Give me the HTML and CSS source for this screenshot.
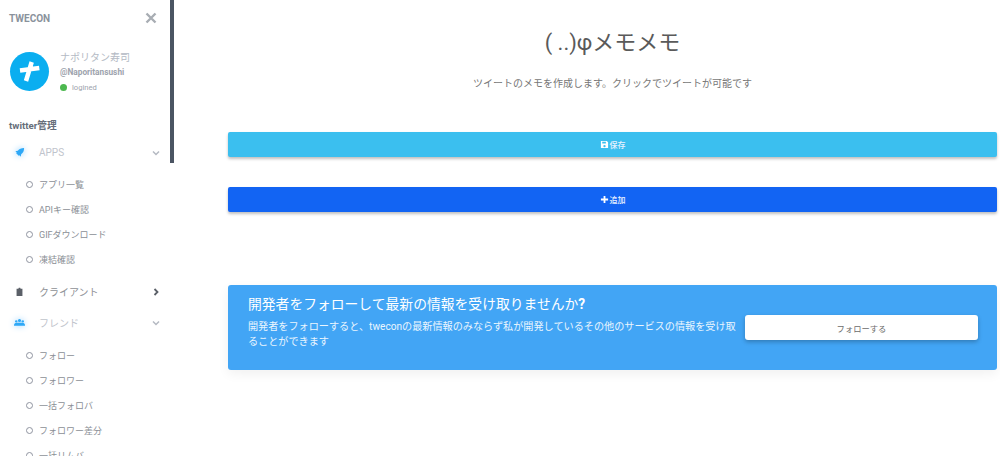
FILE: index.html
```html
<!DOCTYPE html>
<html lang="ja">
<head>
<meta charset="utf-8">
<title>TWECON</title>
<link rel="stylesheet" href="styles.css">
</head>
<body>
<div class="app">
  <aside class="sidebar">
    <div class="brand"><span class="brand-name">TWECON</span>
      <svg class="close" viewBox="0 0 12 12"><path d="M1.500 1.500l9 9M10.500 1.500l-9 9"/></svg>
    </div>
    <div class="profile">
      <div class="avatar"><svg viewBox="0 0 39 39"><path d="M21.700 10L16 29M10 18.500l19.300-2.500"/></svg></div>
      <div class="who">
        <div class="who-name">ナポリタン寿司</div>
        <div class="who-id">@Naporitansushi</div>
        <div class="who-status"><i class="dot"></i>logined</div>
      </div>
    </div>
    <div class="section">twitter管理</div>
    <nav class="nav">
      <div class="item muted">
        <svg class="ico blue" viewBox="0 0 12 12"><path d="M11 1c-3.200 0-5.200 1-6.800 3.200L1.500 4.700 3 6l-.6.8 2.800 2.800.8-.6 1.300 1.500.5-2.700C10 6.200 11 4.200 11 1z"/></svg>
        <span class="label">APPS</span>
        <svg class="chev" viewBox="0 0 10 10"><path d="M2 3.500l3 3 3-3"/></svg>
      </div>
      <ul class="sub">
        <li><i class="ring"></i>アプリ一覧</li>
        <li><i class="ring"></i>APIキー確認</li>
        <li><i class="ring"></i>GIFダウンロード</li>
        <li><i class="ring"></i>凍結確認</li>
      </ul>
      <div class="item">
        <svg class="ico dark" viewBox="0 0 12 12"><path d="M2.800 3h2l.4-1h1.600l.4 1h2v8H2.800z"/></svg>
        <span class="label">クライアント</span>
        <svg class="chev strong" viewBox="0 0 10 10"><path d="M3.500 2l3 3-3 3"/></svg>
      </div>
      <div class="item muted">
        <svg class="ico blue" viewBox="0 0 14 12"><circle cx="7" cy="3.500" r="2"/><circle cx="2.800" cy="4.500" r="1.500"/><circle cx="11.200" cy="4.500" r="1.500"/><path d="M0 9.500c0-2 1.300-3.200 3-3.200h8c1.700 0 3 1.200 3 3.200v.5H0z"/></svg>
        <span class="label">フレンド</span>
        <svg class="chev" viewBox="0 0 10 10"><path d="M2 3.500l3 3 3-3"/></svg>
      </div>
      <ul class="sub sub-wide">
        <li><i class="ring"></i>フォロー</li>
        <li><i class="ring"></i>フォロワー</li>
        <li><i class="ring"></i>一括フォロバ</li>
        <li><i class="ring"></i>フォロワー差分</li>
        <li><i class="ring"></i>一括リムバ</li>
      </ul>
    </nav>
    <div class="thumb"></div>
  </aside>
  <main class="main">
    <h1 class="title">( ..)φメモメモ</h1>
    <p class="lead">ツイートのメモを作成します。クリックでツイートが可能です</p>
    <button class="btn btn-save">
      <svg class="btn-ico" viewBox="0 0 10 10"><path fill-rule="evenodd" d="M1 1h6.500L9 2.500V9H1zM2.500 2v2h4V2zM5 5.500a1.300 1.300 0 1 0 0 2.600 1.300 1.300 0 0 0 0-2.600z"/></svg>保存</button>
    <button class="btn btn-add">
      <svg class="btn-ico" viewBox="0 0 10 10"><path d="M4 1h2v3h3v2H6v3H4V6H1V4h3z"/></svg>追加</button>
    <section class="cta">
      <div class="cta-text">
        <h2 class="cta-title">開発者をフォローして最新の情報を受け取りませんか<b>?</b></h2>
        <p class="cta-body">開発者をフォローすると、tweconの最新情報のみならず私が開発しているその他のサービスの情報を受け取ることができます</p>
      </div>
      <button class="cta-btn">フォローする</button>
    </section>
  </main>
</div>
</body>
</html>
```
FILE: styles.css
```css
* { box-sizing: border-box; }
html, body { margin: 0; height: 100%; overflow: hidden; }
body {
  background: #fff;
  font-family: Roboto, "Noto Sans CJK JP", sans-serif;
  color: #676a6c;
}
.app { display: flex; height: 456px; }
.sidebar {
  position: relative;
  flex: 0 0 174px;
  height: 456px;
  overflow: hidden;
  padding-left: 9px;
}
.thumb {
  position: absolute;
  top: 0; left: 170px;
  width: 3.500px; height: 163px;
  background: #4b5563;
}
.brand {
  display: flex;
  align-items: center;
  justify-content: space-between;
  height: 18px;
  margin-top: 9px;
  padding-right: 17px;
}
.brand-name { font-size: 10px; font-weight: 700; color: #8a929c; }
.close { width: 12px; height: 12px; fill: none; stroke: #a8adb3; stroke-width: 2.400; }
.profile { display: flex; align-items: center; margin-top: 20px; margin-left: 1px; }
.avatar {
  width: 39px; height: 39px; border-radius: 50%;
  background: #0aaef0; flex: none;
}
.avatar svg { display: block; width: 39px; height: 39px; fill: none; stroke: #fff; stroke-width: 4.500; }
.who { margin-left: 11px; padding-top: 3px; }
.who-name { font-size: 10px; line-height: 15px; color: #b4bac4; }
.who-id { font-size: 8.300px; line-height: 15px; font-weight: 700; color: #9da3ad; }
.who-status { display: flex; align-items: center; font-size: 7.600px; line-height: 15px; color: #9da3ad; }
.dot { width: 7px; height: 7px; border-radius: 50%; background: #4cb84f; margin-right: 5px; }
.section { font-size: 9.700px; font-weight: 700; line-height: 14px; margin-top: 24px; color: #666e7a; }
.nav { margin-top: 4px; }
.item { display: flex; align-items: center; height: 31px; font-size: 10px; color: #8e9196; }
.item.muted { color: #bfc4cc; }
.ico { width: 11px; height: 11px; margin-left: 5px; flex: none; }
.ico.blue { fill: #2da8f7; filter: drop-shadow(0 0 3px #8fd0ff); }
.ico.dark { fill: #5b6068; }
.label { margin-left: 14px; flex: 1; }
.chev { width: 10px; height: 10px; margin-right: 13px; fill: none; stroke: #b4b9c2; stroke-width: 1.500; flex: none; }
.chev.strong { stroke: #5b6068; stroke-width: 1.800; }
.sub { list-style: none; margin: 0 0 4px; padding: 4px 0 0 17px; }
.sub-wide { padding-top: 5px; }
.sub li { display: flex; align-items: center; height: 25px; font-size: 9px; color: #8b8f96; }
.ring { width: 7px; height: 7px; border: 1px solid #8f94a0; border-radius: 50%; margin-right: 6px; flex: none; }
.main { flex: 1; padding: 0 3px 0 54px; min-width: 0; }
.title {
  margin: 26px 0 0;
  text-align: center;
  font-size: 22px;
  font-weight: 400;
  line-height: 34px;
  color: #5a5a5a;
}
.lead { margin: 17px 0 0; text-align: center; font-size: 10px; line-height: 14px; color: #777; }
.btn {
  display: flex; align-items: center; justify-content: center;
  width: 100%; height: 25px; border: 0; border-radius: 2px;
  font: 500 8px Roboto, "Noto Sans CJK JP", sans-serif;
  color: #eaf2ff;
  box-shadow: 0 2px 3px rgba(0,0,0,.25);
}
.btn-ico { width: 9px; height: 9px; fill: #fff; margin-right: 1px; }
.btn-save { margin-top: 41px; background: #3bbfef; }
.btn-add { margin-top: 30px; background: #1264f3; }
.cta {
  display: flex; align-items: flex-start;
  margin-top: 73px; height: 85px;
  padding: 9px 19px 0 20px;
  background: #42a5f5; border-radius: 3px;
  box-shadow: 0 4px 12px rgba(0,0,0,.06);
  color: #fff;
}
.cta-text { flex: 1; min-width: 0; }
.cta-title { margin: 0; font-size: 13.800px; font-weight: 400; line-height: 20px; }
.cta-body { margin: 5px 0 0; font-size: 10.150px; line-height: 15px; color: #eaf5fe; }
.cta-btn {
  flex: 0 0 233px; height: 25px; margin: 21px 0 0 5px;
  background: #fff; border: 0; border-radius: 3px;
  font: 400 8.300px Roboto, "Noto Sans CJK JP", sans-serif;
  color: #6b6b6b;
  box-shadow: 0 2px 4px rgba(0,0,0,.25);
}
```
